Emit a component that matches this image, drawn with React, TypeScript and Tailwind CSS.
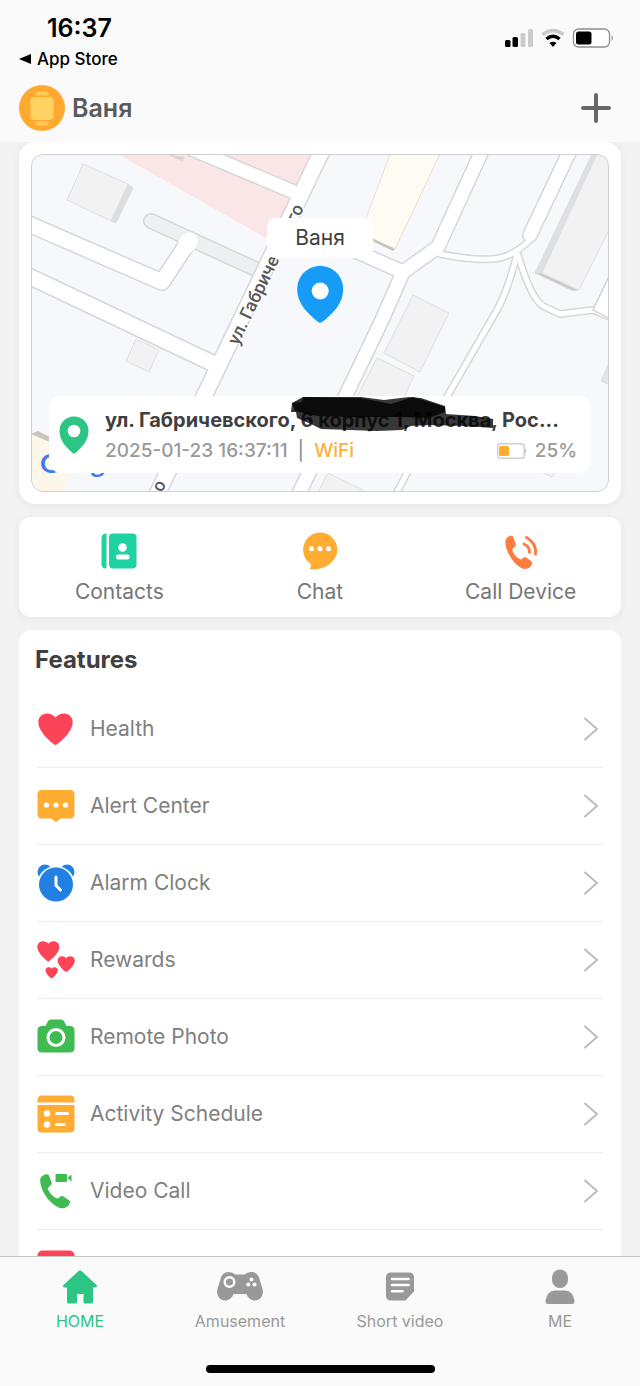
import React from "react";

const HEART =
  "M18.5 35C17 35 2.6 23.5 1.4 13.5C.8 7.3 5 3.5 10 3.5C13.8 3.5 16.8 5.2 18.5 7.6C20.2 5.2 23.2 3.5 27 3.5C32 3.5 36.2 7.3 35.6 13.5C34.4 23.5 20 35 18.5 35Z";

const HANDSET =
  "M3.2 9C3 5 6 3 9 2.3C11 1.8 12 3 12.4 4.5L14.6 10.5C15 12.5 14 13.3 11.8 15C10.4 16 10.7 17 11.5 18.5C13.5 22 16 24.5 19 26C20.5 26.8 21.5 26.5 22.5 25.3C24 23.7 25.3 23.7 26.5 24.5L32 28.3C33.5 29.5 33.2 30.5 32.5 32C30.5 36 25.5 37.5 20.5 35C11 30 3.5 18 3.2 9Z";

interface IconProps {
  children: React.ReactNode;
}

const Icon: React.FC<IconProps> = ({ children }) => (
  <svg viewBox="0 0 38 38" className="size-[38px] shrink-0" aria-hidden="true">
    {children}
  </svg>
);

const NavIcon: React.FC<IconProps> = ({ children }) => (
  <svg viewBox="0 0 48 36" className="h-9 w-12" fill="currentColor" aria-hidden="true">
    {children}
  </svg>
);

const features = [
  {
    label: "Health",
    icon: (
      <Icon>
        <path d={HEART} fill="#fd4358" />
      </Icon>
    ),
  },
  {
    label: "Alert Center",
    icon: (
      <Icon>
        <path
          d="M5 3H33Q37.5 3 37.5 7.5V27Q37.5 31.5 33 31.5H23.5L20.5 34Q19 35 17.500 34L14.500 31.500H5Q.5 31.500 .5 27V7.5Q.5 3 5 3Z"
          fill="#ffac33"
        />
        <g fill="#fff">
          <circle cx="9.5" cy="18" r="2.6" />
          <circle cx="19" cy="18" r="2.6" />
          <circle cx="28.5" cy="18" r="2.6" />
        </g>
      </Icon>
    ),
  },
  {
    label: "Alarm Clock",
    icon: (
      <Icon>
        <circle cx="8" cy="8" r="7.5" fill="#2380e3" />
        <circle cx="30" cy="8" r="7.5" fill="#2380e3" />
        <circle cx="19" cy="21" r="19" fill="#fff" />
        <circle cx="19" cy="20.5" r="17" fill="#2380e3" />
        <path
          d="M19 13V21.5L23.5 26"
          fill="none"
          stroke="#fff"
          strokeWidth="3"
          strokeLinecap="round"
          strokeLinejoin="round"
        />
      </Icon>
    ),
  },
  {
    label: "Rewards",
    icon: (
      <Icon>
        <g fill="#fd4358">
          <path d={HEART} transform="translate(-.5 -2) scale(.64)" />
          <path d={HEART} transform="translate(20 13.5) scale(.5)" />
          <path d={HEART} transform="translate(8 25) scale(.36)" />
        </g>
      </Icon>
    ),
  },
  {
    label: "Remote Photo",
    icon: (
      <Icon>
        <path
          d="M5 8H8.5L11 3Q12 1.5 14 1.5H24Q26 1.5 27 3L29.5 8H33Q37.5 8 37.5 12.5V30Q37.5 34.5 33 34.5H5Q.5 34.5 .5 30V12.5Q.5 8 5 8Z"
          fill="#40bb51"
        />
        <circle cx="19" cy="19.5" r="8" fill="none" stroke="#fff" strokeWidth="3" />
      </Icon>
    ),
  },
  {
    label: "Activity Schedule",
    icon: (
      <Icon>
        <path
          d="M.5 7.5V5Q.5 .5 5 .5H33Q37.5 .5 37.5 5V7.5ZM.5 10H37.5V33Q37.5 37.5 33 37.5H5Q.5 37.5 .5 33Z"
          fill="#ffac33"
        />
        <circle cx="10" cy="18.5" r="3.2" fill="#fff" />
        <circle cx="10" cy="29.5" r="3.2" fill="#fff" />
        <path
          d="M19.5 18.5H30.5M19.5 29.5H27"
          stroke="#fff"
          strokeWidth="3"
          strokeLinecap="round"
        />
      </Icon>
    ),
  },
  {
    label: "Video Call",
    icon: (
      <Icon>
        <path d={HANDSET} fill="#40bb51" />
        <path
          d="M19.5 2H29Q30 2 30 3V9Q30 10 29 10H19.5Q18.5 10 18.5 9V3Q18.5 2 19.5 2ZM30.5 6L34.5 2.5V9.5Z"
          fill="#40bb51"
        />
      </Icon>
    ),
  },
];

const actions = [
  {
    label: "Contacts",
    icon: (
      <Icon>
        <path d="M6.5 1.5V36.5Q1.5 36.5 1.5 32V6Q1.5 1.5 6.5 1.5Z" fill="#1ed2a2" />
        <rect x="9" y="1.5" width="27.5" height="35" rx="4" fill="#1ed2a2" />
        <circle cx="22.5" cy="15.5" r="4.3" fill="#fff" />
        <rect x="16" y="22.5" width="13.5" height="5" rx="2" fill="#fff" />
      </Icon>
    ),
  },
  {
    label: "Chat",
    icon: (
      <Icon>
        <path
          d="M19 .5A17.3 17.3 0 0 1 36.3 17.5C36.3 29 25 38 10 37.5C9 37.5 8.5 37 9.3 36C10.5 34.3 10.3 33 9.3 31.8A17.3 17.3 0 0 1 19 .5Z"
          fill="#ffac33"
        />
        <g fill="#fff">
          <circle cx="10.5" cy="16.7" r="2.5" />
          <circle cx="19" cy="16.7" r="2.5" />
          <circle cx="27.5" cy="16.7" r="2.5" />
        </g>
      </Icon>
    ),
  },
  {
    label: "Call Device",
    icon: (
      <Icon>
        <path d={HANDSET} fill="#ff7b3e" transform="translate(.5 1.5) scale(.9 .98)" />
        <path
          d="M24.5 5.5A16 16 0 0 1 33.5 22M22 12A9 9 0 0 1 27.5 20.5"
          fill="none"
          stroke="#ff7b3e"
          strokeWidth="2.8"
          strokeLinecap="round"
        />
      </Icon>
    ),
  },
];

const tabs = [
  {
    label: "HOME",
    active: true,
    icon: (
      <NavIcon>
        <path d="M22.8 1.8Q24 .8 25.2 1.8L40.5 16Q42 18 39.5 18.5H37V33Q37 34.5 35.5 34.5H29Q27.5 34.5 27.5 33V25H21V33Q21 34.5 19.5 34.5H12.5Q11 34.5 11 33V18.5H8.5Q6 18 7.5 16Z" />
      </NavIcon>
    ),
  },
  {
    label: "Amusement",
    active: false,
    icon: (
      <NavIcon>
        <path d="M13 3Q16.5 3 19.5 5.5H28.5Q31.5 3 35 3C40 3 42.5 6 43.5 10L46.5 20C48 26 44.5 31.5 39 31.5C35 31.5 32 29 30.5 25H17.5C16 29 13 31.5 9 31.5C3.5 31.5 0 26 1.5 20L4.5 10C5.5 6 8 3 13 3Z" />
        <circle cx="13.5" cy="13" r="4.8" fill="none" stroke="#fff" strokeWidth="2.4" />
        <g fill="#fff">
          <circle cx="35.5" cy="10.5" r="2" />
          <circle cx="32.3" cy="15.5" r="2" />
          <circle cx="38.5" cy="15.5" r="2" />
        </g>
      </NavIcon>
    ),
  },
  {
    label: "Short video",
    active: false,
    icon: (
      <NavIcon>
        <path d="M15 3.5H33Q38 3.5 38 8.5V22.5L29.5 31.5H15Q10 31.5 10 26.5V8.5Q10 3.5 15 3.5Z" />
        <path
          d="M16 10H32.5M16 16H32.5M16 22.3H26.5"
          stroke="#fff"
          strokeWidth="2.6"
          strokeLinecap="round"
        />
      </NavIcon>
    ),
  },
  {
    label: "ME",
    active: false,
    icon: (
      <NavIcon>
        <rect x="16" y=".5" width="16" height="18.5" rx="8" />
        <path d="M19 21.5H29Q37 22 38.5 31.5Q38.7 35 36 35H12Q9.3 35 9.5 31.5Q11 22 19 21.5Z" />
      </NavIcon>
    ),
  },
];

function StatusBar() {
  return (
    <div className="flex items-start justify-between pl-[19px] pr-[26px] text-black">
      <div>
        <div className="pl-7 text-[25px] leading-8 font-semibold">16:37</div>
        <a href="#" className="flex items-center gap-[6px] text-[17px] leading-[30px] font-medium">
          <svg viewBox="0 0 12 10" className="h-[10px] w-3" aria-hidden="true">
            <path d="M0 5L12 0V10Z" />
          </svg>
          App Store
        </a>
      </div>
      <svg viewBox="0 0 110 22" className="mt-4 h-[22px] w-[110px]" aria-hidden="true">
        <rect x="1" y="12" width="5.5" height="7" rx="1.5" />
        <rect x="8.5" y="9" width="5.5" height="10" rx="1.5" />
        <rect x="16.5" y="5" width="5" height="14" rx="1.5" fill="#cbcbcb" />
        <rect x="24" y="1" width="5" height="18" rx="1.5" fill="#cbcbcb" />
        <path d="M38.5 6.5Q49 -1.5 59.5 6.5" fill="none" stroke="#cbcbcb" strokeWidth="3.6" />
        <path d="M42.5 11Q49 5.5 55.5 11" fill="none" stroke="#000" strokeWidth="3.6" />
        <path d="M45.5 15Q49 12.5 52.5 15L49 19Z" />
        <rect x="69.5" y="1" width="36" height="18" rx="5" fill="#fff" stroke="#8f8f8f" strokeWidth="1.3" />
        <rect x="72" y="3.5" width="15.5" height="13" rx="2.5" />
        <path d="M107.5 7Q110.5 10 107.5 13Z" fill="#999" />
      </svg>
    </div>
  );
}

const roads = {
  wide: "M332 130L150 509M20 220L31 225L162 282L189 241M20 272L94 307L212 363",
  medium:
    "M180 144L294 192M486 142L438 247L403 272L382 320L346 395L296 500M290 222L403 272M574 142L530 235",
  thin: "M440 254Q480 262 500 258Q516 254 530 240M517 254Q508 290 497 310L448 395L396 494M518 255Q532 302 545 307L560 314L593 310L612 318",
};

function StreetMap() {
  return (
    <svg
      viewBox="31 154 578 338"
      preserveAspectRatio="xMidYMid slice"
      className="absolute inset-0 size-full"
      role="img"
      aria-label="Map"
    >
      <rect x="0" y="100" width="640" height="440" fill="#f6f8fb" />
      <path d="M114 152L330 152L266 238Z" fill="#fbe6e7" />
      <path d="M165 154L182 161L185 157Z" fill="#ded2d3" />

      {/* buildings */}
      <g fill="#f2f2f3" stroke="#dedfe1" strokeWidth="1">
        <path d="M128 184L133 188L116 223L111 221Z" fill="#dddddd" />
        <path d="M83 164L128 184L111 221L67 200Z" />
        <path d="M136 339L159 350L149 372L126 361Z" />
        <path d="M413 295L449 313L420 372L384 353Z" />
        <path d="M377 358L414 376L405 395L371 473L340 430Z" />
        <path d="M328 473L363 490L361 496L316 496Z" />
        <path d="M592 154L598 154L542 273L535 273Z" fill="#dedfe0" />
        <path d="M535 273L542 273L578 290L573 291Z" fill="#c9c9c9" />
        <path d="M598 152L614 152V220L579 290L542 273Z" />
        <path d="M611 358L601 381L612 386Z" fill="#e4e4e5" />
        <path d="M540 471L552 477L556 470Z" />
      </g>
      <path d="M391 152H441L395 249L360 234Z" fill="#fefbf3" stroke="#e5e0d8" strokeWidth="1" />
      <path d="M372 238L395 249L393 251L370 240Z" fill="#c9c2bd" />
      <path d="M31 435L49 443L72 473L62 494H31Z" fill="#fdf7ea" />
      <path d="M31 434L38 431L52 438V443Z" fill="#c9c5bf" />

      {/* roads: grey casing first, white surface above */}
      <g fill="none" strokeLinejoin="round" strokeLinecap="round">
        <path d="M151 221L262 272" stroke="#d5d6d9" strokeWidth="16" />
        <path d="M151 221L262 272" stroke="#edeff1" strokeWidth="13" />
        <g stroke="#d6d7db">
          <path d={roads.wide} strokeWidth="18" />
          <path d={roads.medium} strokeWidth="16" />
          <path d={roads.thin} strokeWidth="8" />
        </g>
        <g stroke="#fff">
          <path d={roads.wide} strokeWidth="15" />
          <path d={roads.medium} strokeWidth="13" />
          <path d={roads.thin} strokeWidth="5" />
          <path d="M187 244L189 241" strokeWidth="18" />
        </g>
      </g>
      <path d="M612 270L593 310L612 320" fill="#fff" stroke="#d3d4d9" strokeWidth="1.5" />

      <g
        fill="#56585c"
        stroke="#fff"
        strokeWidth="3"
        paintOrder="stroke"
        fontSize="18"
        fontWeight="500"
        className="font-[Roboto]"
      >
        <text transform="translate(238 346) rotate(-64.4)">ул. Габричевского</text>
        <text transform="translate(162 493) rotate(-64.4)">о</text>
      </g>
      <text x="40" y="473" fontSize="27" fontFamily="Lato" fontWeight="700">
        <tspan fill="#4479ea">G</tspan>
        <tspan fill="#e84335">o</tspan>
        <tspan fill="#fabb05">o</tspan>
        <tspan fill="#4479ea">g</tspan>
        <tspan fill="#34a853">l</tspan>
        <tspan fill="#e84335">e</tspan>
      </text>
    </svg>
  );
}

function LocationCard() {
  return (
    <section className="rounded-2xl bg-white p-3 shadow-[0_2px_8px_rgba(0,0,0,0.05)]">
      <div className="relative flex h-[338px] flex-col justify-end overflow-hidden rounded-xl px-[18px] pb-[19px]">
        <StreetMap />
        <div className="pointer-events-none absolute inset-0 z-10 rounded-xl border border-[#cfd0d2]" />

        {/* device marker */}
        <div className="absolute top-16 left-1/2 flex -translate-x-1/2 flex-col items-center gap-2">
          <span className="rounded-lg bg-white px-7 text-[21px] leading-10 text-[#404040]">Ваня</span>
          <svg viewBox="0 0 48 58" className="h-[58px] w-12" aria-hidden="true">
            <path
              d="M24 0C37 0 47 10 47 23.5C47 38 36 48 26 56Q24 57.5 22 56C12 48 1 38 1 23.5C1 10 11 0 24 0Z"
              fill="#169cf6"
            />
            <circle cx="24" cy="25" r="8.5" fill="#fff" />
          </svg>
        </div>

        <div className="relative flex items-center gap-4 rounded-xl bg-white py-2 pr-[14px] pl-[10px]">
          <svg viewBox="0 0 30 38" className="h-[38px] w-[30px] shrink-0" aria-hidden="true">
            <path
              d="M15 .5C23.5 .5 29.5 7 29.5 15C29.5 25 22 32 16.5 37Q15 38 13.5 37C8 32 .5 25 .5 15C.5 7 6.5 .5 15 .5Z"
              fill="#2dc584"
            />
            <circle cx="15" cy="15" r="6.3" fill="#fff" />
          </svg>
          <div className="min-w-0 flex-1">
            <p className="truncate text-xl leading-8 font-bold text-[#3f3f3f]">
              ул. Габричевского, 6 корпус 1, Москва, Рос...
            </p>
            <div className="flex items-center justify-between text-[19px] leading-[29px] font-medium text-[#999]">
              <p className="flex gap-[10px]">
                <span>2025-01-23 16:37:11</span>
                <span>|</span>
                <span className="text-[#fdb13c]">WiFi</span>
              </p>
              <span className="flex items-center gap-2">
                <svg viewBox="0 0 30 16" className="h-4 w-[30px]" aria-hidden="true">
                  <rect x=".7" y=".7" width="26.6" height="14.6" rx="2.5" fill="#fff" stroke="#d0d0d0" strokeWidth="1.4" />
                  <rect x="2" y="3" width="10" height="10" rx="1.5" fill="#ffac33" />
                  <path d="M28 5Q30.5 8 28 11Z" fill="#c4c4c4" />
                </svg>
                25%
              </span>
            </div>
          </div>
          {/* marker strokes over the house number */}
          <svg viewBox="292 396 214 36" className="absolute top-0 left-[242px] h-9 w-[214px]" aria-hidden="true">
            <path
              d="M304 397L362 397L385 400L410 397L422 398L446 406L447 414L476 416L494 419V428L466 426L430 425L412 426L403 430L378 431L322 429L312 424L298 418L297 412L292 412L293 403L303 402Z"
              fill="#000"
              fillOpacity=".78"
            />
            <path
              d="M304 397L362 398L392 404L414 397L446 407V412L430 418L404 417L352 417L318 416L296 411L293 403Z"
              fill="#000"
              fillOpacity=".8"
            />
          </svg>
        </div>
      </div>
    </section>
  );
}

export default function App() {
  return (
    <div className="flex h-screen flex-col overflow-hidden bg-[#f2f2f2] font-[Inter,sans-serif]">
      <header className="bg-[#fafafa] pt-3 pb-[11px]">
        <StatusBar />
        <div className="flex items-center gap-[7px] pt-[11px] pr-7 pl-[19px]">
          <svg viewBox="0 0 46 46" className="size-[46px]" aria-hidden="true">
            <circle cx="23" cy="23" r="23" fill="#ffa930" />
            <path d="M18 6.5H28L30.5 10.5H15.5ZM15.5 36.5H30.5L28 40.5H18Z" fill="#ffcb55" />
            <rect x="11.5" y="12" width="23" height="23" rx="4" fill="#ffd262" />
          </svg>
          <h1 className="flex-1 text-[25px] leading-8 font-semibold text-[#5a5a5a]">Ваня</h1>
          <button type="button" aria-label="Add">
            <svg viewBox="0 0 32 32" className="size-8" aria-hidden="true">
              <path d="M16 3V29M3 16H29" stroke="#666" strokeWidth="4" strokeLinecap="round" />
            </svg>
          </button>
        </div>
      </header>

      <main className="flex min-h-0 flex-1 flex-col gap-[13px] overflow-hidden px-[19px]">
        <LocationCard />

        <section className="grid shrink-0 grid-cols-3 rounded-xl bg-white pt-[15px] pb-[11px] shadow-[0_2px_8px_rgba(0,0,0,0.05)]">
          {actions.map((action) => (
            <button key={action.label} type="button" className="flex flex-col items-center gap-2">
              {action.icon}
              <span className="text-[21px] leading-7 text-[#777]">{action.label}</span>
            </button>
          ))}
        </section>

        <section className="shrink-0 rounded-t-xl bg-white">
          <h2 className="px-4 pt-[14px] pb-[15px] text-2xl font-bold text-[#404040]">Features</h2>
          <ul className="px-[18px]">
            {features.map((feature) => (
              <li key={feature.label} className="border-b border-[#ededed]">
                <button type="button" className="flex h-[76px] w-full items-center gap-[15px] text-left">
                  {feature.icon}
                  <span className="flex-1 text-[21px] text-[#808080]">{feature.label}</span>
                  <svg viewBox="0 0 20 26" className="h-[26px] w-5" aria-hidden="true">
                    <path
                      d="M2 2.5L14 13L2 23.5"
                      fill="none"
                      stroke="#bdbdbd"
                      strokeWidth="2"
                      strokeLinecap="round"
                    />
                  </svg>
                </button>
              </li>
            ))}
            <li className="pt-5">
              <Icon>
                <rect x=".5" y=".5" width="37" height="37" rx="5" fill="#fd4358" />
              </Icon>
            </li>
          </ul>
        </section>
      </main>

      <nav className="shrink-0 border-t border-[#c4c4c4] bg-[#fafafa] pt-3 pb-[13px]">
        <div className="grid grid-cols-4">
          {tabs.map((tab) => (
            <a
              key={tab.label}
              href="#"
              className={`flex flex-col items-center gap-1 ${
                tab.active ? "text-[#2dc584]" : "text-[#999]"
              }`}
            >
              {tab.icon}
              <span className="text-base leading-6">{tab.label}</span>
            </a>
          ))}
        </div>
        <div className="mx-auto mt-8 h-2 w-[229px] rounded-full bg-black" />
      </nav>
    </div>
  );
}
